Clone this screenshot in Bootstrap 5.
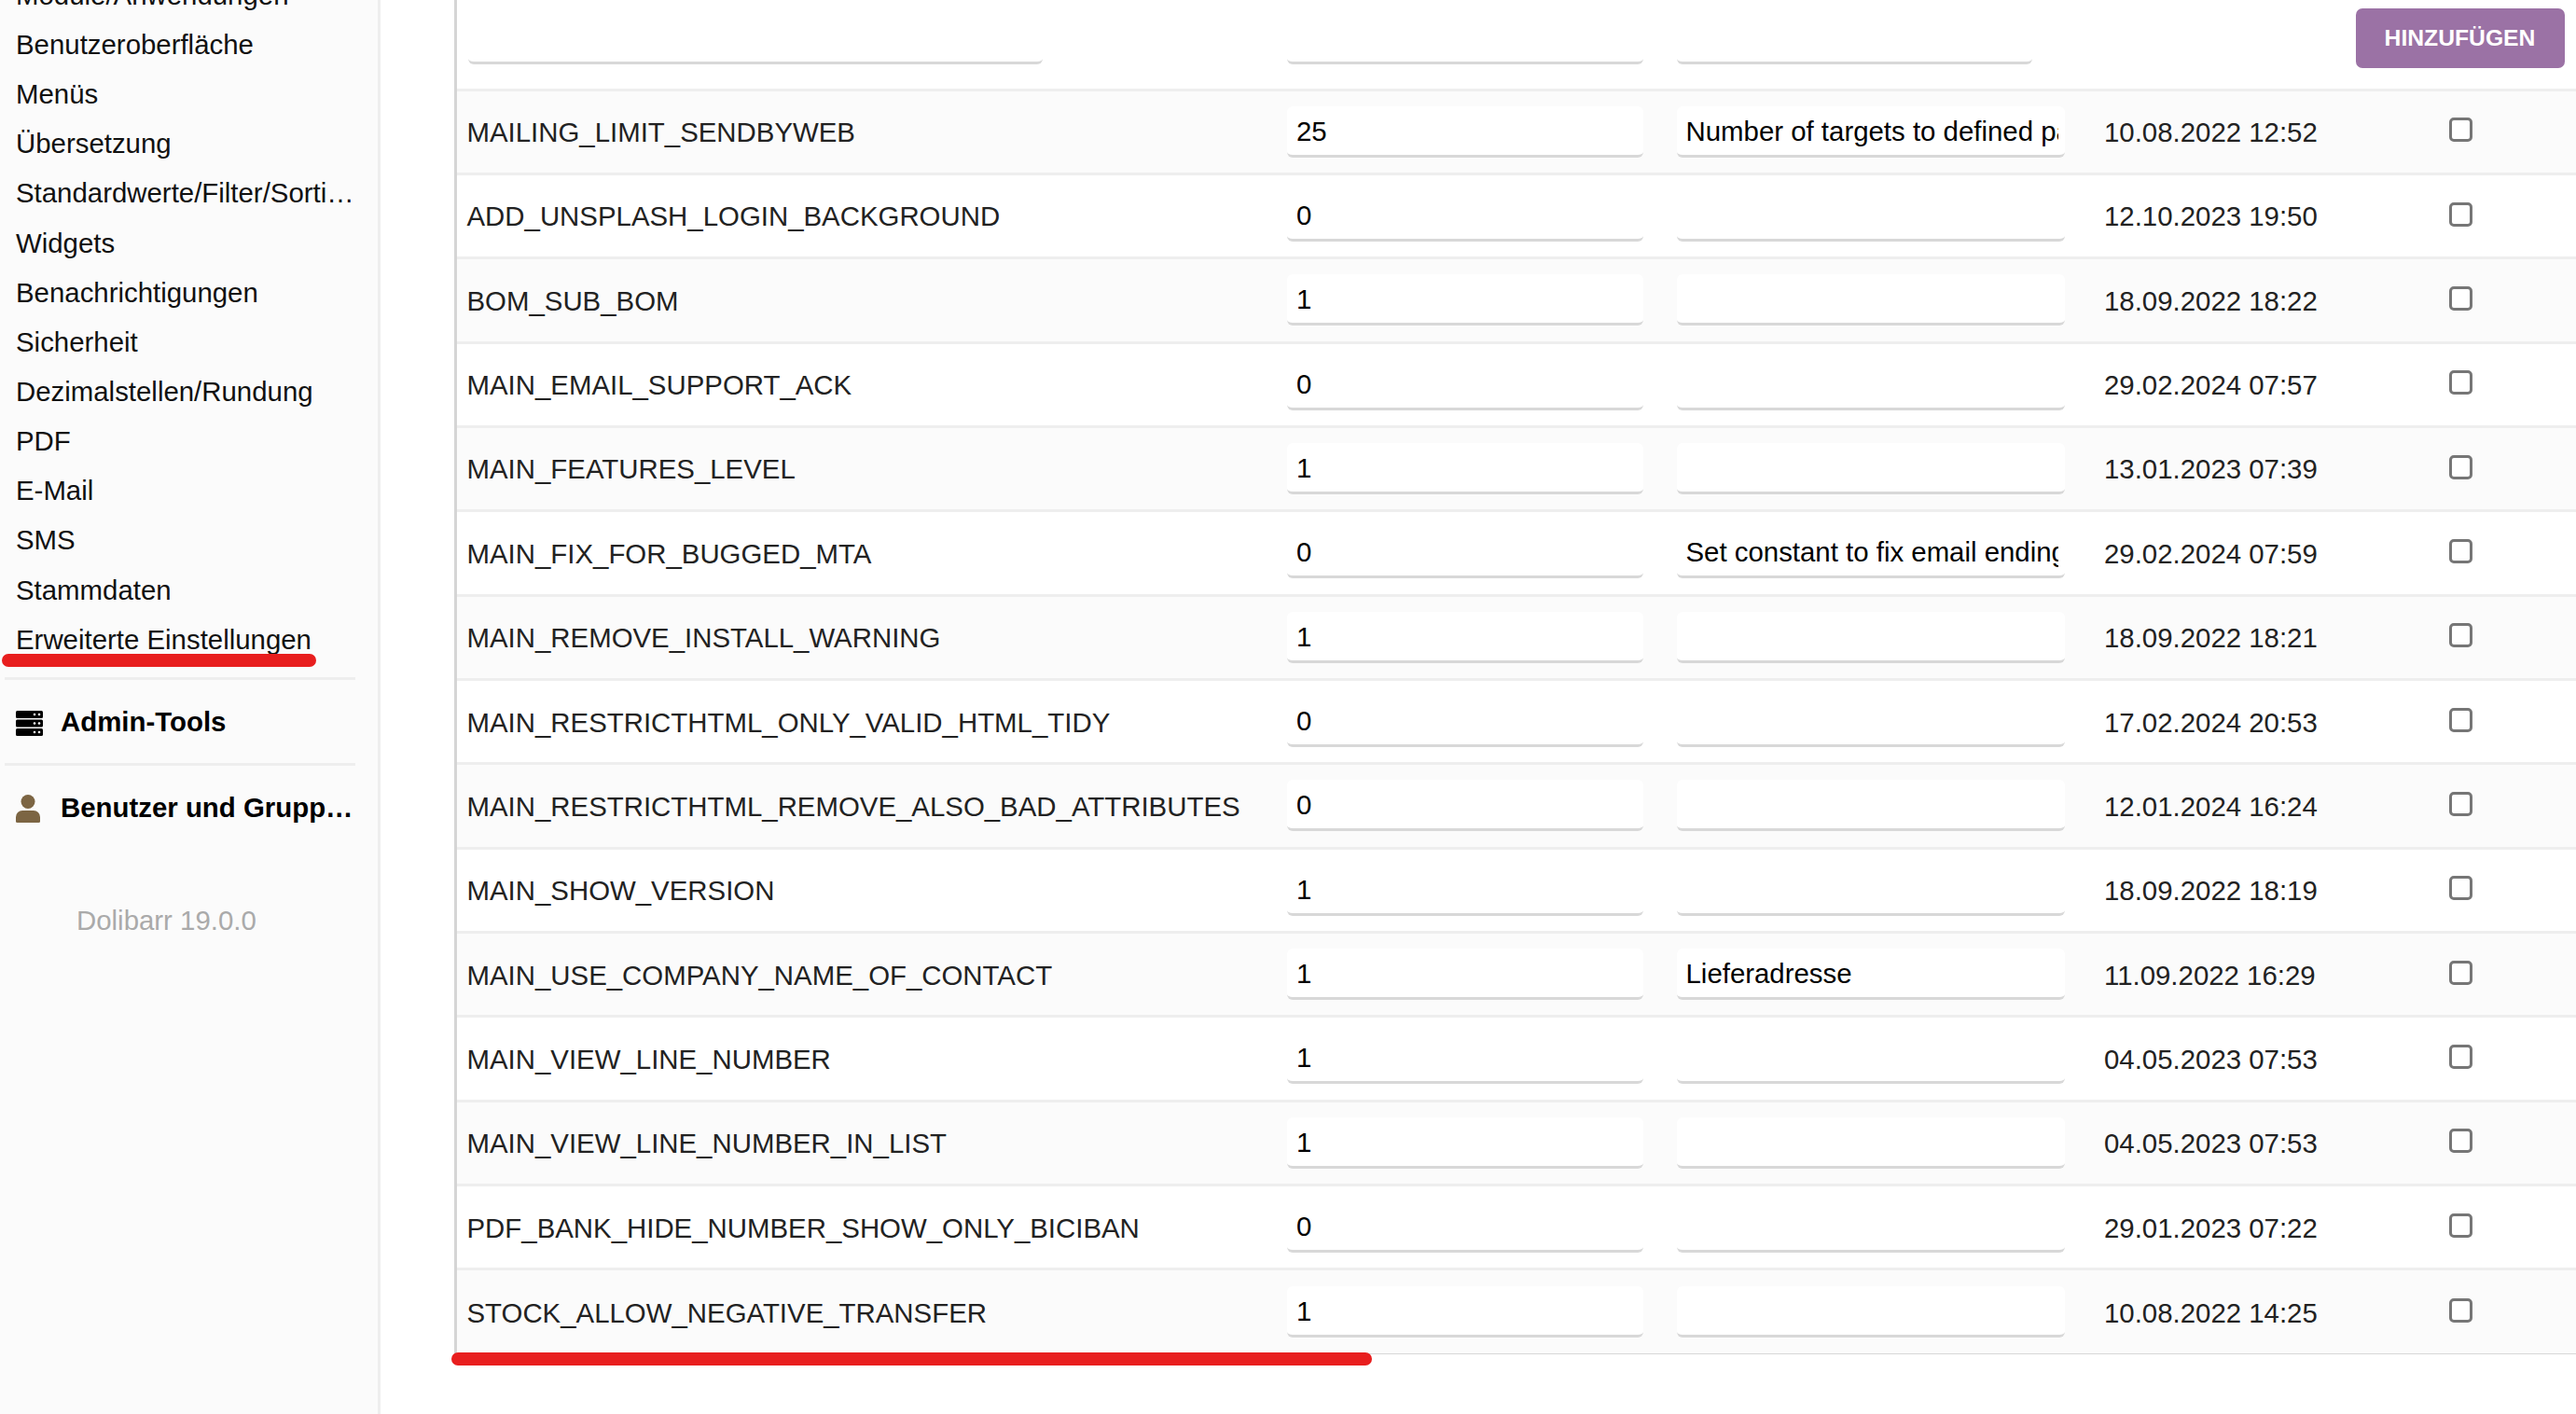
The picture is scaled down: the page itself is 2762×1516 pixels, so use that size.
<!DOCTYPE html>
<html lang="de">
<head>
  <meta charset="UTF-8" />
  <meta name="viewport" content="width=device-width, initial-scale=1.0" />
  <title>Erweiterte Einstellungen</title>
  <link href="https://cdn.jsdelivr.net/npm/bootstrap@5.3.3/dist/css/bootstrap.min.css" rel="stylesheet" />
  <style>
    html, body { height: 100%; overflow: hidden; }
    body { font-family: "Liberation Sans", Arial, sans-serif; font-size: 29.4px; color: #222; background: #fff; }
    .page-wrap { position: relative; height: 1516px; overflow: hidden; }
    .side-menu { width: 408px; background: #fbfbfb; border-right: 3px solid #eee; padding-left: 5px; padding-right: 24px; }
    .side-scroll { margin-top: -32.2px; }
    .side-link { height: 53.15px; line-height: 53.15px; padding-left: 12px; color: #111; text-decoration: none; display: block; white-space: nowrap; overflow: hidden; text-overflow: ellipsis; }
    .side-block { border-top: 3px solid #eee; height: 92px; color: #000; font-weight: 700; padding-left: 12px; }
    .side-block:last-of-type { border-bottom: 3px solid #eee; height: 95px; }
    .side-first { margin-top: 14px; }
    .side-icon { width: 48px; flex: none; }
    .side-title { white-space: nowrap; overflow: hidden; text-overflow: ellipsis; padding-top: 2px; }
    .side-version { color: #aaa; padding-left: 77px; margin-top: 55px; }
    .main-area { padding-left: 79px; }
    .conf-wrap { border-left: 3px solid #d5d5d5; border-bottom: 3px solid #d8d8d8; height: 1452px; }
    .conf-table { table-layout: fixed; width: 2272px; margin: 0; border-collapse: collapse; }
    .conf-table td { padding: 0; border: 0; border-top: 3px solid #eee; height: 90.35px; vertical-align: middle; background: #fff; color: #222; box-shadow: none; }
    .conf-table tr:nth-child(even) td { background: #fbfbfb; }
    .conf-table tr.add-row td { height: 96px; border-top: 0; vertical-align: top; }
    .col-name { width: 880px; padding-left: 10.5px !important; padding-top: 2px !important; white-space: nowrap; }
    .col-value { width: 417px; padding-left: 10px !important; }
    .col-note { width: 460px; padding-left: 10.5px !important; }
    .col-date { width: 268px; padding-left: 9px !important; padding-top: 2px !important; white-space: nowrap; }
    .col-check { text-align: center; }
    .conf-input { display: block; height: 55px; border: 0; border-bottom: 3px solid #d8d8d8; border-radius: 6px; background: #fff; padding: 2px 7px 0 10px; font-size: 29.4px; color: #000; font-family: inherit; outline: none; }
    .input-value { width: 382px; }
    .input-note { width: 416.5px; }
    .add-row .conf-input { margin-top: 14px; }
    .add-row .input-name { width: 616px; margin-left: 1px; }
    .add-row .input-note { width: 381px; }
    .add-row .col-name { padding-top: 0 !important; }
    .conf-check.form-check-input { width: 25px; height: 26px; margin: 0 0 8px; border: 3px solid #767676; border-radius: 5px; background-color: #fff; vertical-align: middle; }
    .btn-add { background: #9b72a5; color: #fff; border: 0; border-radius: 7px; width: 224px; height: 64px; margin: 9px 2px 0 0; padding: 0; font-size: 24.7px; font-weight: 700; }
    .mark-line { position: absolute; background: #e81e1e; border-radius: 7px; height: 14px; }
    .mark-side { left: 2px; top: 701px; width: 337px; }
    .mark-main { left: 484px; top: 1450px; width: 987px; }
  </style>
</head>
<body>
  <div class="page-wrap d-flex">
    <nav class="side-menu flex-shrink-0">
      <div class="side-scroll">
        <a class="side-link" href="#">Module/Anwendungen</a>
        <a class="side-link" href="#">Benutzeroberfläche</a>
        <a class="side-link" href="#">Menüs</a>
        <a class="side-link" href="#">Übersetzung</a>
        <a class="side-link" href="#">Standardwerte/Filter/Sortierung</a>
        <a class="side-link" href="#">Widgets</a>
        <a class="side-link" href="#">Benachrichtigungen</a>
        <a class="side-link" href="#">Sicherheit</a>
        <a class="side-link" href="#">Dezimalstellen/Rundung</a>
        <a class="side-link" href="#">PDF</a>
        <a class="side-link" href="#">E-Mail</a>
        <a class="side-link" href="#">SMS</a>
        <a class="side-link" href="#">Stammdaten</a>
        <a class="side-link" href="#">Erweiterte Einstellungen</a>
        <div class="side-block side-first d-flex align-items-center">
          <span class="side-icon">
            <svg width="29" height="27" viewBox="0 0 29 27"><rect y="0" width="29" height="8" rx="1.5" fill="#000"/><rect y="9.5" width="29" height="8" rx="1.5" fill="#000"/><rect y="19" width="29" height="8" rx="1.5" fill="#000"/><g fill="#fff"><circle cx="20" cy="4" r="1.3"/><circle cx="25" cy="4" r="1.3"/><circle cx="20" cy="13.5" r="1.3"/><circle cx="25" cy="13.5" r="1.3"/><circle cx="20" cy="23" r="1.3"/><circle cx="25" cy="23" r="1.3"/></g></svg>
          </span>
          <span class="side-title">Admin-Tools</span>
        </div>
        <div class="side-block d-flex align-items-center">
          <span class="side-icon">
            <svg width="26" height="30" viewBox="0 0 26 30"><circle cx="13" cy="7.5" r="7.500" fill="#7c6543"/><path d="M7 17h12a7 7 0 0 1 7 7v4.5a1.5 1.5 0 0 1-1.5 1.5h-23A1.5 1.5 0 0 1 0 28.500V24a7 7 0 0 1 7-7z" fill="#7c6543"/></svg>
          </span>
          <span class="side-title">Benutzer und Gruppen</span>
        </div>
        <div class="side-version">Dolibarr 19.0.0</div>
      </div>
    </nav>

    <main class="main-area flex-grow-1">
      <div class="conf-wrap">
        <table class="table conf-table">
          <tbody id="confRows">
            <tr class="add-row">
              <td class="col-name"><input class="conf-input input-name" type="text" /></td>
              <td class="col-value"><input class="conf-input input-value" type="text" /></td>
              <td class="col-note"><input class="conf-input input-note" type="text" /></td>
              <td class="col-date"></td>
              <td class="col-check"><button class="btn btn-add" type="button">HINZUFÜGEN</button></td>
            </tr>
          </tbody>
        </table>
      </div>
    </main>

    <div class="mark-line mark-side"></div>
    <div class="mark-line mark-main"></div>
  </div>

  <script src="https://cdn.jsdelivr.net/npm/bootstrap@5.3.3/dist/js/bootstrap.bundle.min.js"></script>
  <script>
    const confRows = [
      ["MAILING_LIMIT_SENDBYWEB", "25", "Number of targets to defined packet during sending", "10.08.2022 12:52"],
      ["ADD_UNSPLASH_LOGIN_BACKGROUND", "0", "", "12.10.2023 19:50"],
      ["BOM_SUB_BOM", "1", "", "18.09.2022 18:22"],
      ["MAIN_EMAIL_SUPPORT_ACK", "0", "", "29.02.2024 07:57"],
      ["MAIN_FEATURES_LEVEL", "1", "", "13.01.2023 07:39"],
      ["MAIN_FIX_FOR_BUGGED_MTA", "0", "Set constant to fix email ending from PHP", "29.02.2024 07:59"],
      ["MAIN_REMOVE_INSTALL_WARNING", "1", "", "18.09.2022 18:21"],
      ["MAIN_RESTRICTHTML_ONLY_VALID_HTML_TIDY", "0", "", "17.02.2024 20:53"],
      ["MAIN_RESTRICTHTML_REMOVE_ALSO_BAD_ATTRIBUTES", "0", "", "12.01.2024 16:24"],
      ["MAIN_SHOW_VERSION", "1", "", "18.09.2022 18:19"],
      ["MAIN_USE_COMPANY_NAME_OF_CONTACT", "1", "Lieferadresse", "11.09.2022 16:29"],
      ["MAIN_VIEW_LINE_NUMBER", "1", "", "04.05.2023 07:53"],
      ["MAIN_VIEW_LINE_NUMBER_IN_LIST", "1", "", "04.05.2023 07:53"],
      ["PDF_BANK_HIDE_NUMBER_SHOW_ONLY_BICIBAN", "0", "", "29.01.2023 07:22"],
      ["STOCK_ALLOW_NEGATIVE_TRANSFER", "1", "", "10.08.2022 14:25"]
    ];

    const tbody = document.getElementById("confRows");
    confRows.forEach(([name, value, note, date]) => {
      const tr = document.createElement("tr");
      tr.innerHTML = `
        <td class="col-name">${name}</td>
        <td class="col-value"><input class="conf-input input-value" type="text" value="${value}" /></td>
        <td class="col-note"><input class="conf-input input-note" type="text" value="${note}" /></td>
        <td class="col-date">${date}</td>
        <td class="col-check"><input class="form-check-input conf-check" type="checkbox" /></td>
      `;
      tbody.appendChild(tr);
    });
  </script>
</body>
</html>
